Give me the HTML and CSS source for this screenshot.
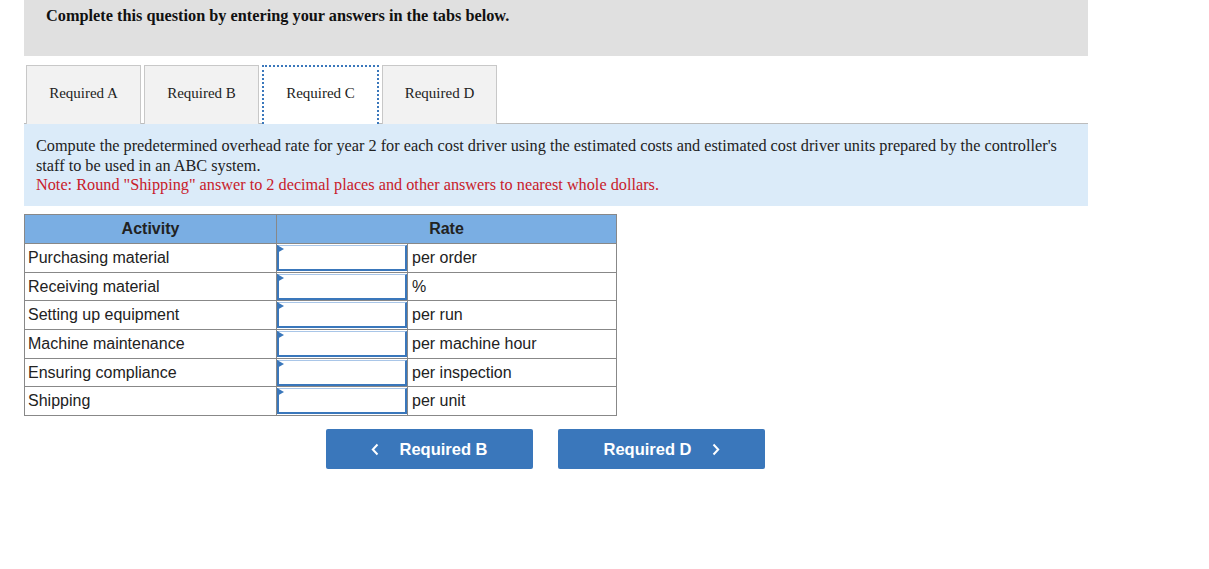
FILE: index.html
```html
<!DOCTYPE html>
<html>
<head>
<meta charset="utf-8">
<link rel="stylesheet" href="styles.css">
</head>
<body>
<div class="page">
  <div class="banner">Complete this question by entering your answers in the tabs below.</div>
  <div class="tabs">
    <div class="tab">Required A</div>
    <div class="tab">Required B</div>
    <div class="tab active">Required C</div>
    <div class="tab">Required D</div>
  </div>
  <div class="instructions">
    <p>Compute the predetermined overhead rate for year 2 for each cost driver using the estimated costs and estimated cost driver units prepared by the controller's staff to be used in an ABC system.</p>
    <p class="note">Note: Round "Shipping" answer to 2 decimal places and other answers to nearest whole dollars.</p>
  </div>
  <table class="grid">
    <thead>
      <tr><th class="c1">Activity</th><th colspan="2">Rate</th></tr>
    </thead>
    <tbody>
      <tr><td class="c1">Purchasing material</td><td class="inp"><div class="box"></div></td><td class="unit">per order</td></tr>
      <tr><td class="c1">Receiving material</td><td class="inp"><div class="box"></div></td><td class="unit">%</td></tr>
      <tr><td class="c1">Setting up equipment</td><td class="inp"><div class="box"></div></td><td class="unit">per run</td></tr>
      <tr><td class="c1">Machine maintenance</td><td class="inp"><div class="box"></div></td><td class="unit">per machine hour</td></tr>
      <tr><td class="c1">Ensuring compliance</td><td class="inp"><div class="box"></div></td><td class="unit">per inspection</td></tr>
      <tr><td class="c1">Shipping</td><td class="inp"><div class="box"></div></td><td class="unit">per unit</td></tr>
    </tbody>
  </table>
  <div class="nav">
    <div class="btn"><svg class="chev" width="8" height="13" viewBox="0 0 8 13"><path d="M6.5 1.5 L1.8 6.5 L6.5 11.5" fill="none" stroke="#fff" stroke-width="2"/></svg><span>Required B</span></div>
    <div class="btn"><span>Required D</span><svg class="chev" width="8" height="13" viewBox="0 0 8 13"><path d="M1.5 1.5 L6.2 6.5 L1.5 11.5" fill="none" stroke="#fff" stroke-width="2"/></svg></div>
  </div>
</div>
</body>
</html>
```
FILE: styles.css
```css
html, body { margin: 0; padding: 0; background: #fff; }
.page { margin-left: 24px; width: 1064px; }
.banner {
  background: #e0e0e0;
  height: 56px;
  box-sizing: border-box;
  padding: 6px 0 0 22px;
  font: bold 16.3px/20px "Liberation Serif", serif;
  color: #111;
}
.tabs {
  display: flex;
  gap: 3px;
  margin-top: 9px;
  padding-left: 2px;
  border-bottom: 1px solid #bcbcbc;
  height: 58px;
}
.tab {
  width: 115px;
  box-sizing: border-box;
  height: 59px;
  padding-bottom: 3px;
  background: #f2f2f2;
  border: 1px solid #c8c8c8;
  border-bottom: none;
  display: flex;
  align-items: center;
  justify-content: center;
  font: 15px "Liberation Serif", serif;
  color: #222;
}
.tab.active {
  width: 117px;
  padding-bottom: 5px;
  background: #fff;
  border: 2px dotted #3a77bb;
  border-bottom: none;
  position: relative;
  z-index: 1;
}
.instructions {
  background: #dbebf9;
  padding: 13px 20px 12px 12px;
  font: 16.25px/19.5px "Liberation Serif", serif;
  color: #222;
  height: 82px;
  box-sizing: border-box;
}
.instructions p { margin: 0; }
.instructions .note { color: #c8202a; }
.grid {
  margin-top: 8px;
  border-collapse: collapse;
  width: 593px;
  font: 16px "Liberation Sans", Arial, sans-serif;
  color: #222;
}
.grid th {
  background: #7aaee3;
  border: 1px solid #888;
  height: 28px;
  padding: 0;
  font-weight: bold;
  color: #222;
}
.grid td {
  border: 1px solid #888;
  height: 27.7px;
  padding: 0;
}
.grid th.c1 { width: 251px; }
.grid td.c1 { width: 248px; padding-left: 3px; }
.grid td.inp { width: 130px; }
.grid td.unit { padding-left: 4px; }
.box {
  background: #fff;
  position: relative;
  box-sizing: border-box;
  width: 130px;
  height: 26px;
  border-style: solid;
  border-width: 1px 2px 2px 2px;
  border-color: #a9c6e8 #3a77bb #3a77bb #3a77bb;
}
.box::before {
  content: "";
  position: absolute;
  left: -2px;
  top: -1px;
  border-left: 7px solid #3a77bb;
  border-top: 4px solid transparent;
  border-bottom: 4px solid transparent;
}
.nav {
  display: flex;
  gap: 25px;
  margin-top: 13px;
  padding-left: 302px;
}
.btn {
  width: 207px;
  height: 40px;
  background: #3a77bb;
  border-radius: 2px;
  color: #fff;
  font: bold 16.5px "Liberation Sans", Arial, sans-serif;
  display: flex;
  align-items: center;
  justify-content: center;
  gap: 20px;
}
.chev { display: block; }
```
